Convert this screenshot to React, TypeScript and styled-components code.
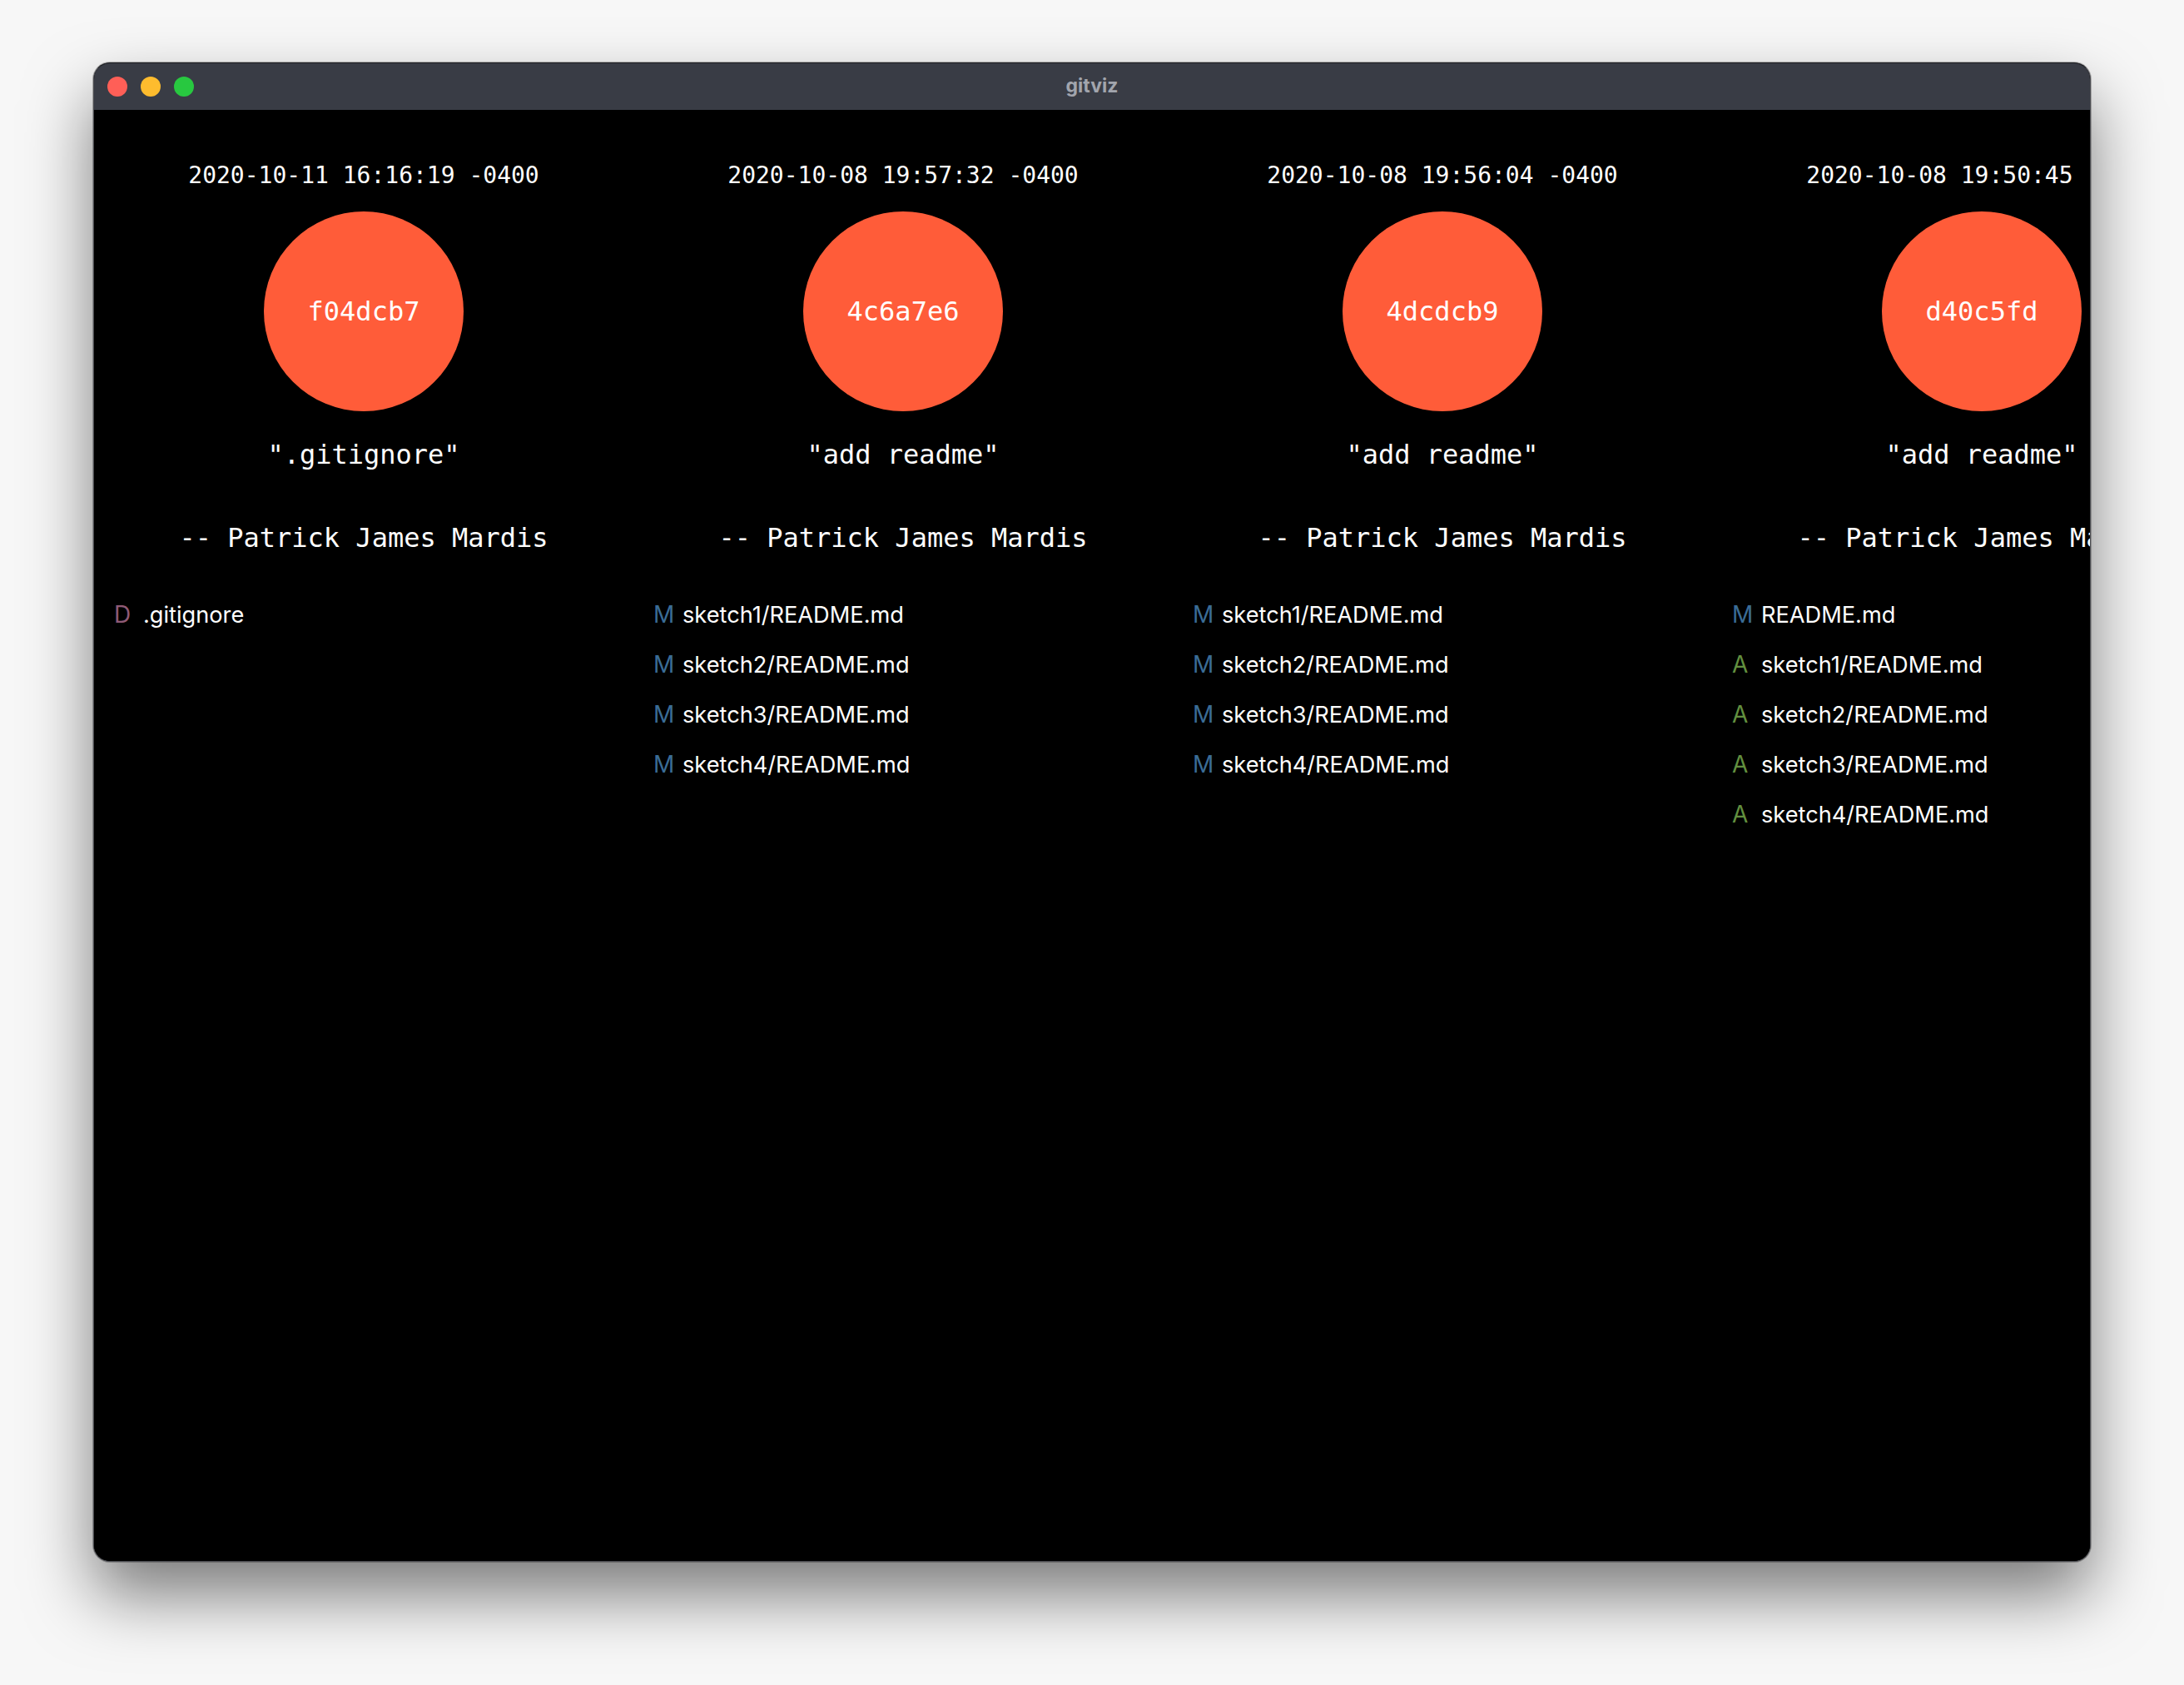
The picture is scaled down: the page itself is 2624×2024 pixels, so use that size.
import React from 'react';
import styled, {createGlobalStyle} from 'styled-components';

type FileChange = {
    status: 'A' | 'M' | 'D',
    path: string
}

type Commit = {
    hash: string,
    date: string,
    message: string,
    author: string,
    files: FileChange[]
}

const commits: Commit[] = [
    {
        hash: 'f04dcb7',
        date: '2020-10-11 16:16:19 -0400',
        message: '".gitignore"',
        author: 'Patrick James Mardis',
        files: [{status: 'D', path: '.gitignore'}]
    },
    {
        hash: '4c6a7e6',
        date: '2020-10-08 19:57:32 -0400',
        message: '"add readme"',
        author: 'Patrick James Mardis',
        files: [
            {status: 'M', path: 'sketch1/README.md'},
            {status: 'M', path: 'sketch2/README.md'},
            {status: 'M', path: 'sketch3/README.md'},
            {status: 'M', path: 'sketch4/README.md'}
        ]
    },
    {
        hash: '4dcdcb9',
        date: '2020-10-08 19:56:04 -0400',
        message: '"add readme"',
        author: 'Patrick James Mardis',
        files: [
            {status: 'M', path: 'sketch1/README.md'},
            {status: 'M', path: 'sketch2/README.md'},
            {status: 'M', path: 'sketch3/README.md'},
            {status: 'M', path: 'sketch4/README.md'}
        ]
    },
    {
        hash: 'd40c5fd',
        date: '2020-10-08 19:50:45 -0400',
        message: '"add readme"',
        author: 'Patrick James Mardis',
        files: [
            {status: 'M', path: 'README.md'},
            {status: 'A', path: 'sketch1/README.md'},
            {status: 'A', path: 'sketch2/README.md'},
            {status: 'A', path: 'sketch3/README.md'},
            {status: 'A', path: 'sketch4/README.md'}
        ]
    }
]

const statusColors = {
    A: '#62903f',
    M: '#3a6c96',
    D: '#8f5a76'
}

const GlobalStyle = createGlobalStyle`
  html, body {
    margin: 0;
    padding: 0;
    background: #f7f7f7;
  }
`;

export default function App() {
    return (
        <>
            <GlobalStyle/>
            <Desktop>
                <Window>
                    <TitleBar>
                        <Lights>
                            <Light color="#ff5f57"/>
                            <Light color="#febc2e"/>
                            <Light color="#28c840"/>
                        </Lights>
                        <Title>gitviz</Title>
                    </TitleBar>
                    <Timeline>
                        {commits.map(commit => (
                            <CommitColumn key={commit.hash}>
                                <DateLine>{commit.date}</DateLine>
                                <Node>{commit.hash}</Node>
                                <Message>{commit.message}</Message>
                                <Author>-- {commit.author}</Author>
                                <FileList>
                                    {commit.files.map(file => (
                                        <FileRow key={file.status + file.path}>
                                            <Status color={statusColors[file.status]}>{file.status}</Status>
                                            {file.path}
                                        </FileRow>
                                    ))}
                                </FileList>
                            </CommitColumn>
                        ))}
                    </Timeline>
                </Window>
            </Desktop>
        </>
    )
}

const Desktop = styled.div`
  width: 2624px;
  height: 2024px;
  padding: 75px 0 0 112px;
  box-sizing: border-box;
  overflow: hidden;
`;

const Window = styled.div`
  width: 2400px;
  height: 1801px;
  display: flex;
  flex-direction: column;
  border: 1px solid #4c4d52;
  border-top-color: #1e1f23;
  border-radius: 20px;
  overflow: hidden;
  background: #000;
  box-sizing: border-box;
  box-shadow: 0 40px 80px rgba(0, 0, 0, 0.5), 0 0 0 1px rgba(0, 0, 0, 0.25);
`;

const TitleBar = styled.div`
  height: 56px;
  flex-shrink: 0;
  display: flex;
  align-items: center;
  justify-content: center;
  position: relative;
  background: #393c45;
`;

const Lights = styled.div`
  position: absolute;
  left: 16px;
  top: 16px;
  display: flex;
  gap: 16px;
`;

const Light = styled.span<{ color: string }>`
  width: 24px;
  height: 24px;
  border-radius: 50%;
  background: ${p => p.color};
`;

const Title = styled.div`
  font-family: Inter, "Noto Sans", sans-serif;
  font-weight: 700;
  font-size: 23px;
  color: #a2a5ad;
  margin-top: -2px;
`;

const Timeline = styled.div`
  flex: 1;
  display: flex;
  overflow: hidden;
  background: #000;
`;

const CommitColumn = styled.div`
  width: 648px;
  flex-shrink: 0;
  display: flex;
  flex-direction: column;
  align-items: center;
  color: #fff;
  font-family: "DejaVu Sans Mono", "Liberation Mono", monospace;
`;

const DateLine = styled.div`
  margin-top: 62px;
  font-size: 28px;
  line-height: 34px;
  white-space: nowrap;
`;

const Node = styled.div`
  margin-top: 26px;
  width: 240px;
  height: 240px;
  border-radius: 50%;
  background: #ff5c39;
  display: flex;
  align-items: center;
  justify-content: center;
  font-size: 32px;
`;

const Message = styled.div`
  margin-top: 33px;
  font-size: 32px;
  line-height: 38px;
  white-space: nowrap;
`;

const Author = styled.div`
  margin-top: 62px;
  font-size: 32px;
  line-height: 38px;
  white-space: nowrap;
`;

const FileList = styled.div`
  align-self: stretch;
  margin-top: 43px;
  padding-left: 24px;
  display: flex;
  flex-direction: column;
`;

const FileRow = styled.div`
  display: flex;
  align-items: center;
  height: 60px;
  font-family: Inter, "Noto Sans", sans-serif;
  font-size: 27.2px;
  color: #fff;
  white-space: nowrap;
`;

const Status = styled.span<{ color: string }>`
  width: 35px;
  font-size: 28px;
  color: ${p => p.color};
`;
